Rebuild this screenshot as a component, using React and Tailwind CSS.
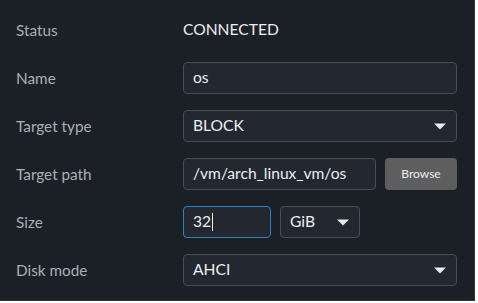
const Caret = () => (
  <svg width="12" height="7" viewBox="0 0 12 7" className="shrink-0">
    <path d="M0 0.5h12L6 6.5z" fill="#e6e8eb" />
  </svg>
);

const Row = ({ label, children }) => (
  <div className="grid grid-cols-[167px_1fr] items-center h-8">
    <span className="text-[15.3px] text-[#aab0b8]">{label}</span>
    <div className="flex items-center gap-2">{children}</div>
  </div>
);

const Select = ({ value, className }) => (
  <div
    className={`flex items-center justify-between h-8 rounded border border-[#484d55] bg-[#232830] pl-[9px] pr-[10px] text-[15.6px] text-[#eceef0] ${className}`}
  >
    <span>{value}</span>
    <Caret />
  </div>
);

export default function App() {
  return (
    <div
      className="w-[475px] h-[301px] bg-[#1b1f26] border-r border-b border-[#30353d] pl-4 pr-[17px] pt-[14px] flex flex-col gap-4"
      style={{ fontFamily: 'Lato, "Open Sans", sans-serif' }}
    >
      <Row label="Status">
        <span className="text-[15.6px] text-[#eceef0]">CONNECTED</span>
      </Row>
      <Row label="Name">
        <div className="flex items-center w-full h-8 rounded border border-[#484d55] bg-[#232830] pl-[9px] text-[15.6px] text-[#eceef0]">
          os
        </div>
      </Row>
      <Row label="Target type">
        <Select value="BLOCK" className="w-full" />
      </Row>
      <Row label="Target path">
        <div className="flex items-center flex-1 h-8 rounded border border-[#484d55] bg-[#232830] pl-[9px] text-[15.6px] text-[#eceef0]">
          /vm/arch_linux_vm/os
        </div>
        <button className="w-[72px] h-8 rounded bg-[#5e5e5e] text-[12px] text-[#eceef0] ml-px">
          Browse
        </button>
      </Row>
      <Row label="Size">
        <div className="flex items-center w-[88px] h-8 rounded border border-[#2d82c4] bg-[#232830] pl-[9px] text-[15.6px] text-[#eceef0]">
          32<span className="inline-block w-px h-[18px] bg-[#eceef0] ml-px" />
        </div>
        <Select value="GiB" className="w-[80px] ml-px" />
      </Row>
      <Row label="Disk mode">
        <Select value="AHCI" className="w-full" />
      </Row>
    </div>
  );
}
